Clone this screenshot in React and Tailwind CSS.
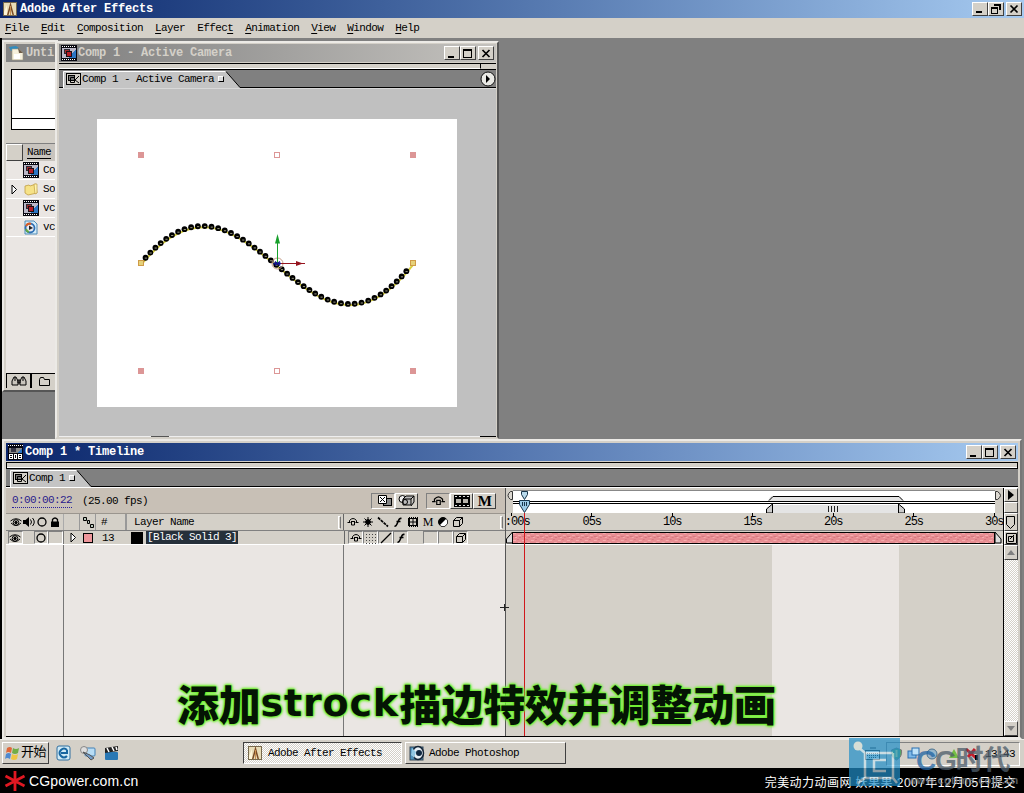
import React from "react";

const MENU = ["File", "Edit", "Composition", "Layer", "Effect", "Animation", "View", "Window", "Help"];
const MENU_KEY = { Effect: 5 };

const RAISED = "border border-t-white border-l-white border-r-[#404040] border-b-[#404040] bg-[#d4d0c8]";
const SUNKEN = "border border-t-[#808080] border-l-[#808080] border-r-white border-b-white";
const DITHER = "bg-[repeating-conic-gradient(#ffffff_0_25%,#d4d0c8_0_50%)] bg-[length:2px_2px]";

const WindowButtons = () => (
  <div className="flex h-[14px]">
    <span className={`flex w-4 items-center justify-center ${RAISED}`}>
      <svg width="12" height="11" shapeRendering="crispEdges"><path d="M2 8h6v2h-6z" /></svg>
    </span>
    <span className={`flex w-4 items-center justify-center ${RAISED}`}>
      <svg width="12" height="11" shapeRendering="crispEdges">
        <path d="M1 1h9v9h-9zM2 3v6h7v-6z" fillRule="evenodd" />
      </svg>
    </span>
    <span className={`ml-0.5 flex w-4 items-center justify-center ${RAISED}`}>
      <svg width="12" height="11"><path d="M2.500 2l7 7m0-7l-7 7" stroke="#000" strokeWidth="1.700" /></svg>
    </span>
  </div>
);

const AeIcon = () => (
  <svg width="14" height="14" viewBox="0 0 14 14">
    <rect x=".5" y=".5" width="13" height="13" fill="#e8dcb8" stroke="#76694d" />
    <path d="M1 10l3-7v10H1z" fill="#fff5d8" />
    <path d="M7.500 0L4 13h1.500L7.500 6l2 7H11z" fill="#7a4a24" />
    <path d="M7.500 4v9" stroke="#c89050" />
  </svg>
);

const CompIcon = () => (
  <svg width="16" height="16" viewBox="0 0 16 16" shapeRendering="crispEdges">
    <rect width="16" height="16" fill="#080810" />
    <path d="M1 1.500h14M1 14.500h14" stroke="#fff" strokeDasharray="1 1" />
    <rect x="1" y="3" width="14" height="10" fill="#bbb8c8" />
    <path d="M15 4v9h-7z" fill="#2d76c4" />
    <rect x="3" y="4" width="6" height="5" fill="#2c2c34" />
    <rect x="4" y="5" width="4" height="3" fill="#a02a30" />
    <rect x="5" y="6" width="6" height="6" fill="#1a1014" />
    <rect x="6" y="7" width="4" height="4" fill="#b81c28" />
  </svg>
);

const TimelineIcon = () => (
  <svg width="15" height="16" viewBox="0 0 15 16" shapeRendering="crispEdges">
    <rect width="15" height="16" fill="#050510" />
    <path d="M0 1.500h15" stroke="#fff" strokeDasharray="1 1" />
    <rect x="1" y="4" width="13" height="5" fill="#888" />
    <path d="M3 4h5v4h-5z" fill="#334" />
    <path d="M14 4v5h-5z" fill="#2d76c4" />
    <path d="M1.500 10.500h3v4h-3zM6.500 10.500h2v4h-2zM10.500 10.500h3v4h-3zM1 12.500h4M10 12.500h4" fill="none" stroke="#fff" />
  </svg>
);

const TabIcon = () => (
  <svg width="15" height="12" viewBox="0 0 15 12">
    <rect x=".5" y=".5" width="14" height="11" fill="#d4d0c8" stroke="#000" />
    <rect x="2.500" y="2.500" width="6" height="5" fill="#777" stroke="#000" />
    <path d="M4.500 4.500h4v5h-4zM9 7l4-4M9 7l4 3" fill="none" stroke="#000" />
  </svg>
);

const ProjectIcon = () => (
  <svg width="16" height="16" viewBox="0 0 16 16" className="shrink-0">
    <path d="M1 2l7-1 3 2-8 3z" fill="#2f8cc0" />
    <path d="M4 4h7l4 4v7H4z" fill="#f6f0dc" stroke="#9b937e" strokeWidth=".6" />
    <path d="M6 14V9h6v5z" fill="#fff" /><path d="M10 3l5 5h-4z" fill="#6d5c48" />
  </svg>
);

const FolderIcon = () => (
  <svg width="14" height="13" viewBox="0 0 14 13">
    <path d="M1 3l4-1 1 1 6-2 1 9-9 2-3-2z" fill="#f6e287" stroke="#c09d43" strokeWidth=".8" />
    <path d="M10 1l3 0v9l-2 1z" fill="#fff4b0" stroke="#c09d43" strokeWidth=".7" />
  </svg>
);

const QuickTimeIcon = () => (
  <svg width="14" height="15" viewBox="0 0 14 15">
    <path d="M1 1h9l3 3v10H1z" fill="#d4ecf8" stroke="#4e8bb8" />
    <circle cx="6" cy="8" r="4.500" fill="#e9eaf0" stroke="#2d6eb4" strokeWidth="1.800" />
    <path d="M2 6a4 4 0 0 1 5-2" stroke="#d85b24" strokeWidth="2" fill="none" />
    <path d="M2 9a4 4 0 0 0 3 3" stroke="#63a845" strokeWidth="2" fill="none" />
    <path d="M5 5.500l4 2.500-4 2z" fill="#222" />
  </svg>
);

const Twirl = () => (
  <svg width="7" height="11" viewBox="0 0 7 11"><path d="M1 1v9l4.500-4.500z" fill="#fff" stroke="#000" /></svg>
);

// strokes for the column and layer switches, drawn on a 12x12 grid
const SWITCHES = {
  eye: <g fill="none" stroke="#000"><path d="M0.500 5Q6 .5 11.500 5M1 7q5 5 10 0" /><circle cx="6" cy="6.500" r="2.800" /><circle cx="6" cy="6.500" r="1.200" fill="#000" /></g>,
  sound: <g><path d="M0 4h2.500L6 1v10L2.500 8H0z" /><path d="M7.500 3.500q2 2.500 0 5M9.500 2q3.500 4 0 8" fill="none" stroke="#000" /></g>,
  solo: <circle cx="6" cy="6" r="4" fill="none" stroke="#000" strokeWidth="1.300" />,
  lock: <g><path d="M2 5.500h8v5.500H2z" /><path d="M3.500 6V3.500q2.500-3 5 0V6" fill="none" stroke="#000" strokeWidth="1.300" /></g>,
  shy: <g fill="none" stroke="#000"><path d="M2.500 6V4.500q3.500-4 7 0V6M.5 6.500h3M8.500 6.500h3M4.500 6v3h3v-3M4 5.500h4" /></g>,
  sun: <g stroke="#000"><circle cx="6" cy="6" r="2.400" /><path d="M6 1v10M1 6h10M2.500 2.500l7 7M9.500 2.500l-7 7" /></g>,
  slash: <path d="M1 1.500l10 9" stroke="#000" strokeWidth="1.700" strokeDasharray="3 .8" />,
  quality: <path d="M1 11L11 1" stroke="#000" strokeWidth="1.200" />,
  fx: <path d="M2.500 10q1.500 .5 2.500-2l2-4.500q.8-1.500 2.500-1M4.500 5.500h4" fill="none" stroke="#000" strokeWidth="1.600" />,
  film: <g><path d="M1 1h10v10H1z" /><path d="M3 3h2.500v2.500H3zM6.500 3H9v2.500H6.500zM3 6.500h2.500V9H3zM6.500 6.500H9V9H6.500z" fill="#d4d0c8" /><path d="M1 1.500h10M1 10.500h10" stroke="#d4d0c8" strokeDasharray="1 1" /></g>,
  contrast: <g><circle cx="6" cy="6" r="4.500" stroke="#000" /><path d="M9 3a4 4 0 0 1-6 6z" fill="#fff" /></g>,
  cube: <path d="M1.500 4.500h6v6h-6zM1.500 4.500l3-3h6l-3 3M10.500 1.500v6l-3 3" fill="none" stroke="#000" />,
  dots: <path d="M1 2.500h11M1 5.500h11M1 8.500h11M1 11.500h11" stroke="#444" strokeDasharray="1 2" />,
  tag: <g fill="#b9c9bd" stroke="#000"><path d="M1.500 1.500h3v3h-3zM5.500 4.500h2v3h-2zM8.500 8.500h3v3h-3z" /></g>,
};

const Switch = ({ name, w = 12, h = 12 }) => (
  <svg width={w} height={h} viewBox="0 0 12 12" className="shrink-0">{SWITCHES[name]}</svg>
);

const Tab = ({ label, width }) => (
  <div className="relative flex h-[18px] bg-[#808080] border-b border-black">
    <svg width={width} height="18" className="absolute left-1 top-0">
      <path d={`M0 18V1.500H${width - 15}L${width - 1} 17.500V18z`} fill="#c4c4c4" />
      <path d={`M.5 18V1.500H${width - 15}`} stroke="#fff" fill="none" />
      <path d={`M${width - 15} 1.500L${width - 1} 17.500`} stroke="#000" fill="none" />
    </svg>
    <div className="relative ml-[7px] flex items-center pt-px">
      <TabIcon />
      <span className="ml-px">{label}</span>
      <span className="ml-1 size-[6px] border border-black border-t-white border-l-white bg-[#ddd]" />
    </div>
  </div>
);

const ProjectWindow = () => (
  <section className="absolute left-[2px] top-[2px] flex h-[352px] w-[56px] flex-col border-t-2 border-l-2 border-b-2 border-t-[#eceae6] border-l-[#eceae6] border-b-[#555] bg-[#d4d0c8] py-0.5 pl-0.5">
    <div className="flex h-[18px] items-center bg-[#858585] pl-0.5 text-[12px] font-bold tracking-[-0.2px] text-[#d4d0c8]">
      <ProjectIcon /><span className="ml-0.5">Unti</span>
    </div>
    <div className="h-[81px] pt-[7px] pl-[5px]">
      <div className="h-[61px] border border-r-0 border-black bg-white">
        <div className="h-[49px] border-b border-black" />
      </div>
    </div>
    <div className="flex h-[18px] border-t border-[#808080] bg-[#c8c4be]">
      <span className={`h-[17px] w-[17px] ${RAISED}`} />
      <span className="ml-1 mt-px h-[14px] border-b border-black leading-[15px]">Name</span>
    </div>
    <ul className="grow bg-[#eae6e3]">
      {[
        [<CompIcon />, "Co"],
        [<FolderIcon />, "So", true],
        [<CompIcon />, "vc"],
        [<QuickTimeIcon />, "vc"],
      ].map(([icon, label, group], i) => (
        <li key={i} className="flex h-[19px] items-center border-b border-white">
          <span className="flex w-[17px] shrink-0 justify-center">{group && <Twirl />}</span>
          <span className="flex w-4 shrink-0 justify-center">{icon}</span>
          <span className="ml-1">{label}</span>
        </li>
      ))}
    </ul>
    <div className="flex h-[15px] border-t border-black">
      <span className="flex w-[26px] shrink-0 items-center justify-center border-r-2 border-l border-black">
        <svg width="18" height="12"><path d="M2 10V6l2-4h2l2 4v4zM10 10V6l2-4h2l2 4v4zM8 5h2v3H8zM5 2v4M13 2v4" fill="#c8c4bc" stroke="#000" /></svg>
      </span>
      <span className="flex w-[26px] shrink-0 items-center justify-center">
        <svg width="12" height="10"><path d="M.5 9.500v-6l1-2h3l1 2h5v6z" fill="none" stroke="#000" /></svg>
      </span>
    </div>
  </section>
);

const CURVE = [[141, 263], [250, 132], [306, 402], [413, 263]];

function curvePoint(t) {
  const u = 1 - t;
  const k = [u * u * u, 3 * u * u * t, 3 * u * t * t, t * t * t];
  return [0, 1].map((axis) => CURVE.reduce((sum, p, i) => sum + p[axis] * k[i], 0));
}

// points at an even distance along the curve
function strokeDots(gap) {
  const dots = [];
  let last = CURVE[0];
  for (let t = 0; t < 0.99; t += 0.001) {
    const p = curvePoint(t);
    if (Math.hypot(p[0] - last[0], p[1] - last[1]) >= gap) {
      dots.push(p);
      last = p;
    }
  }
  return dots;
}

const CompCanvas = () => (
  <svg width="360" height="288" viewBox="97 119 360 288" className="bg-white">
    <path d="M141 263C250 132 306 402 413 263" fill="none" stroke="#d8d040" strokeWidth="2" transform="translate(.6 1.200)" />
    {strokeDots(6.75).map(([x, y]) => (
      <g key={x}>
        <circle cx={x} cy={y} r="2.900" />
        <path d={`M${x - 0.8} ${y + 0.4}h2.200`} stroke="#d9d9b4" strokeWidth=".7" />
      </g>
    ))}
    {[141, 413].map((x) => [155, 371].map((y) => (
      <rect key={`${x}-${y}`} x={x - 3} y={y - 3} width="6" height="6" fill="#dc9696" />
    )))}
    {[155, 371].map((y) => (
      <rect key={y} x="274.500" y={y - 2.5} width="5" height="5" fill="#fff" stroke="#dc9696" />
    ))}
    {[141, 413].map((x) => (
      <rect key={x} x={x - 2.5} y="260.500" width="5" height="5" fill="#e6d27a" stroke="#cf9b48" />
    ))}
    <circle cx="277.500" cy="263.500" r="5.500" fill="none" stroke="#c49a86" />
    <path d="M277.500 263V242" stroke="#18a02c" /><path d="M275 243.500l2.500-9.500 2.500 9.500z" fill="#18a02c" />
    <path d="M278 263.500h27" stroke="#96141e" /><path d="M296 261l7 2.500-7 2.500z" fill="#96141e" />
    <path d="M273 263.500h8M275 261.500l5 4M280 261.500l-5 4" stroke="#14148c" strokeWidth="1.300" />
  </svg>
);

const CompWindow = () => (
  <section className="absolute left-[55px] top-[3px] flex h-[398px] w-[444px] flex-col border-2 border-t-[#eceae6] border-l-[#eceae6] border-r-[#555] border-b-[#d4d0c8] bg-[#d4d0c8] pl-0.5 pr-px pt-px">
    <div className="flex h-[18px] items-center bg-linear-to-r from-[#808080] to-[#c4c2be] pl-0.5 text-[12px] font-bold tracking-[-0.2px] text-[#d4d0c8]">
      <CompIcon /><span className="grow pl-px">Comp 1 - Active Camera</span>
      <div className="mr-0.5"><WindowButtons /></div>
    </div>
    <div className="mt-px flex h-[7px] border-y border-black">
      <div className="w-[422px] border-r border-b border-r-black border-b-white" />
    </div>
    <div className="relative">
      <Tab label="Comp 1 - Active Camera" width={178} />
      <svg width="16" height="16" className="absolute right-0 top-px">
        <circle cx="8" cy="8" r="7" fill="#e8e8e4" stroke="#111" /><path d="M6 4v8l4-4z" />
      </svg>
    </div>
    <div className="flex grow justify-start border-t border-[#d8d8d8] bg-[#c0c0c0] pl-[38px] pt-[30px]">
      <CompCanvas />
    </div>
    <div className="flex h-px bg-[#eee]">
      <span className="ml-[92px] w-[18px] bg-[#555]" />
      <span className="ml-auto w-4 bg-black" />
    </div>
  </section>
);

const SwitchBox = ({ children }) => (
  <span className={`flex h-[13px] w-[15px] items-center justify-center ${SUNKEN}`}>{children}</span>
);

const LayerPanel = () => (
  <div className="relative z-10 flex w-[500px] shrink-0 flex-col border-r border-[#555]">
    <div className="flex h-[25px] items-center bg-[#c8c0b6] pl-1.5">
      <span className="border-b border-dotted border-[#2a20a0] leading-[13px] text-[#2a1c8c]">0:00:00:22</span>
      <span className="ml-[10px]">(25.00 fps)</span>
      <div className="ml-auto mr-[9px] flex h-4 items-center">
        <span className={`flex h-4 w-[24px] items-center justify-end pr-0.5 ${SUNKEN}`}>
          <svg width="14" height="11"><rect x="5.500" y="3.500" width="8" height="7" fill="#888" stroke="#000" /><path d="M.5.5h8v8h-8zM2 2l5 5M7 2L2 7" fill="#fff" stroke="#000" /></svg>
        </span>
        <span className={`flex h-4 w-[23px] items-center justify-center ${RAISED}`}>
          <svg width="18" height="12"><circle cx="4.500" cy="4" r="3.500" fill="#eee" stroke="#000" /><path d="M5 4h8v6H5zM5 4l3-3h8l-3 3M16 1v6l-3 4" fill="#bbb" stroke="#000" /><circle cx="7" cy="7" r="2.500" fill="none" stroke="#000" /></svg>
        </span>
        <span className={`ml-2 flex h-4 w-[24px] items-center justify-center ${SUNKEN}`}><Switch name="shy" w={15} h={14} /></span>
        <span className={`flex h-4 w-[23px] items-center justify-center ${RAISED}`}>
          <svg width="16" height="12" shapeRendering="crispEdges"><path d="M0 0h16v12H0z" /><path d="M1 1.500h15M1 10.500h15" stroke="#ddd" strokeDasharray="2 2" /><path d="M2 4h5v4H2zM9 4h5v4H9z" fill="#b8b4ac" /></svg>
        </span>
        <span className={`flex h-4 w-[23px] items-center justify-center [font-family:'Liberation_Serif',serif] text-[15px] font-bold ${RAISED}`}>M</span>
      </div>
    </div>
    <div className="flex h-[18px] items-center border-t border-b border-t-[#9a958e] border-b-[#808080] bg-[#d4d0c8]">
      <div className="flex h-full w-[58px] items-center gap-px border-r border-[#aaa] pl-1">
        <Switch name="eye" /><Switch name="sound" /><Switch name="solo" /><Switch name="lock" />
      </div>
      <div className="h-full w-4 border-r border-[#999]" />
      <div className="flex h-full w-4 items-center justify-center border-r border-[#999]"><Switch name="tag" /></div>
      <div className="flex h-full w-[31px] items-center border-r-2 border-[#999] pl-[5px]">#</div>
      <div className="flex h-full w-[217px] items-center border-r border-[#666] pl-[7px]">
        Layer Name<span className="ml-auto mr-0.5 h-[13px] w-[3px] border border-white border-r-[#777]" />
      </div>
      <div className="flex h-full grow items-center gap-[3px] pl-[3px]">
        <Switch name="shy" /><Switch name="sun" /><Switch name="slash" /><Switch name="fx" /><Switch name="film" />
        <span className="w-3 text-center [font-family:'Liberation_Serif',serif] text-[12px] tracking-normal">M</span>
        <Switch name="contrast" /><Switch name="cube" />
        <span className="ml-auto mr-0.5 h-[13px] w-[3px] border border-white border-r-[#777]" />
      </div>
    </div>
    <div className="flex h-[14px] items-center border-b border-white bg-[#d4d0c8]">
      <div className="flex h-full w-[58px] border-r border-[#777] pl-0.5">
        <SwitchBox><Switch name="eye" /></SwitchBox>
        <span className="w-[11px]" />
        <SwitchBox><Switch name="solo" /></SwitchBox>
        <SwitchBox />
      </div>
      <span className="ml-1.5"><Twirl /></span>
      <span className="ml-1.5 h-[10px] w-[10px] border border-black bg-[#ee969b]" />
      <span className="ml-[9px] w-[29px]">13</span>
      <span className="h-3 w-3 bg-black" />
      <span className="ml-[3px] h-[13px] bg-[#26303a] px-px leading-[13px] text-white">[Black Solid 3]</span>
      <div className="ml-auto flex h-full w-[161px] border-l border-[#666] pl-[3px]">
        <SwitchBox><Switch name="shy" /></SwitchBox>
        <SwitchBox><Switch name="dots" /></SwitchBox>
        <SwitchBox><Switch name="quality" /></SwitchBox>
        <SwitchBox><Switch name="fx" /></SwitchBox>
        <span className="w-[15px]" />
        <SwitchBox /><SwitchBox />
        <SwitchBox><Switch name="cube" /></SwitchBox>
      </div>
    </div>
    <div className="flex grow bg-[#eae6e3]">
      <div className="w-[58px] border-r border-[#777]" />
      <div className="w-[280px] border-r border-[#777]" />
    </div>
    {/* splitter cursor */}
    <svg width="11" height="7" className="absolute -right-[5px] top-[116px]"><path d="M1 3.500h9M5.500 0v7" stroke="#222" /></svg>
  </div>
);

const TimeNavigator = () => (
  <svg width="498" height="25" viewBox="506 488 498 25" className="block shrink-0 bg-[#d0ccc4]">
    <rect x="513" y="491" width="482" height="22" fill="#fff" />
    <path d="M513 490.500h482" stroke="#888" />
    <path d="M772 496h127l4 4v1H768l2-4zM772 505h127v8H772z" fill="#e4e4e4" />
    <path d="M769 500.500l4-4h126l4 4" fill="none" stroke="#000" />
    <path d="M513 501.500h482M513 503.500h482" stroke="#000" />
    <path d="M512.500 491.500v8h-2q-5-4 0-8zM995.500 491.500v8h2q6-4 0-8z" fill="#ddd9d2" stroke="#333" />
    <path d="M772.500 504v9h-6v-4l6-5M898.500 504v9h6v-4l-6-5" fill="#ccc" stroke="#000" />
    <path d="M828.500 506v6M831.500 506v6M834.500 506v6M837.500 506v6" stroke="#222" />
    <path d="M521.500 491.500h6v3l-3 5-3-5z" fill="#b8d9ec" stroke="#18344a" />
    <path d="M519.500 500.500h10v4l-5 8-5-8z" fill="#9ccae6" stroke="#18344a" />
    <path d="M522.500 502v4M524.500 502v4M526.500 502v4" stroke="#18344a" />
  </svg>
);

const TIMES = [":00s", "05s", "10s", "15s", "20s", "25s", "30s"];

const TrackPanel = () => (
  <div className="relative flex w-[498px] shrink-0 flex-col overflow-hidden border-r border-black">
    <TimeNavigator />
    <div className="-ml-[35px] flex h-[18px] w-[570px] border-b border-[#808080] bg-[#d4d0c8] text-[12px] tracking-[-1px]">
      {TIMES.map((time, i) => (
        <div key={time} className="flex w-[80.5px] shrink-0 flex-col items-center">
          <span className="h-[3px] w-px shrink-0 bg-black" />
          <span className={`leading-[13px] ${i === 0 ? "pl-3" : ""}`}>{time}</span>
        </div>
      ))}
    </div>
    <div className="flex h-[14px] items-center border-b border-white">
      <svg width="498" height="13" viewBox="506 531 498 13">
        <defs>
          <pattern id="grain" width="9" height="7" patternUnits="userSpaceOnUse">
            <rect width="9" height="7" fill="#e88e93" />
            <path d="M0 1.500h3M5 3.500h3M2 5.500h2" stroke="#f4adae" /><path d="M4 .5h2M0 4.500h3M6 5.500h2" stroke="#d57a80" />
          </pattern>
        </defs>
        <rect x="512.500" y="532.500" width="483" height="11" fill="url(#grain)" stroke="#000" />
        <path d="M512.500 532v11h-6v-4zM996 532v11h6v-4z" fill="#ddd" stroke="#000" />
      </svg>
    </div>
    <div className="flex grow bg-[#d4d0c8]">
      <div className="ml-[266px] w-[127px] bg-[#eae6e3]" />
    </div>
    <div className="absolute top-[25px] bottom-0 left-[18px] w-px bg-[#d0181c]" />
  </div>
);

const ScrollColumn = () => (
  <div className="flex grow flex-col">
    <div className={`flex h-[14px] items-center justify-center ${RAISED}`}><svg width="8" height="10"><path d="M1 0v10l6-5z" /></svg></div>
    <div className={`h-[11px] ${RAISED}`} />
    <div className={`flex h-[18px] items-center justify-center ${RAISED}`}><svg width="10" height="13"><path d="M.5.5h8v8l-4 4-4-4z" fill="none" stroke="#000" /></svg></div>
    <div className={`flex h-[14px] items-center justify-center ${RAISED}`}><svg width="11" height="11"><path d="M.5.5h10v10H.5zM2.500 3.500h5v5h-5zM4 6l4-4" fill="none" stroke="#000" /></svg></div>
    <div className={`flex grow flex-col justify-between ${DITHER}`}>
      <div className={`flex h-[15px] items-center justify-center ${RAISED}`}><svg width="8" height="5"><path d="M0 5l4-5 4 5z" fill="#808080" /></svg></div>
      <div className={`flex h-[15px] items-center justify-center ${RAISED}`}><svg width="8" height="5"><path d="M0 0l4 5 4-5z" fill="#808080" /></svg></div>
    </div>
  </div>
);

const TimelineWindow = () => (
  <section className="absolute left-[2px] top-[401px] flex h-[300px] w-[1020px] flex-col border-2 border-t-[#eceae6] border-l-[#eceae6] border-r-[#777] border-b-[#eceae6] bg-[#d4d0c8] px-0.5 pt-0.5">
    <div className="flex h-[18px] items-center bg-linear-to-r from-[#0a246a] via-[#5577b0] to-[#a6caf0] pl-0.5 text-[12px] font-bold tracking-[-0.2px] text-white">
      <TimelineIcon /><span className="grow pl-0.5">Comp 1 * Timeline</span>
      <div className="mr-0.5"><WindowButtons /></div>
    </div>
    <div className="mt-px h-[7px] border border-black border-b-black shadow-[inset_0_-1px_#fff]" />
    <Tab label="Comp 1" width={82} />
    <div className="flex min-h-0 grow border-t border-b border-t-white border-b-black">
      <LayerPanel />
      <TrackPanel />
      <ScrollColumn />
    </div>
  </section>
);

const PhotoshopIcon = () => (
  <svg width="16" height="16"><rect x="1" y="2" width="13" height="13" fill="#4c91bd" stroke="#345" /><ellipse cx="9" cy="8" rx="5.500" ry="6.500" fill="#e8f0f6" stroke="#162536" strokeWidth="1.500" /><circle cx="10" cy="8" r="3" fill="#102840" /><path d="M3 3l4 4-2 6-3-3z" fill="#92c7e3" /></svg>
);

const Taskbar = () => (
  <footer className="flex h-[29px] shrink-0 items-start border-t border-[#eceae6] bg-[#d4d0c8] pt-0.5 pl-0.5">
    <button className={`flex h-[22px] w-[47px] items-center pl-0.5 ${RAISED}`}>
      <svg width="16" height="16">
        <path d="M2 3q3-2 5 0l-1 5q-3-2-5 0z" fill="#e0683a" /><path d="M8 3q3 2 6 0l-1 5q-3 2-6 0z" fill="#72ad46" />
        <path d="M1 9q3-2 5 0l-1 5q-3-2-5 0z" fill="#4e8ad0" /><path d="M7 9q3 2 6 0l-1 5q-3 2-6 0z" fill="#efc542" />
      </svg>
      <span className="text-[13px] tracking-[-0.5px]">开始</span>
    </button>
    <div className="ml-[7px] flex gap-2 pt-[3px]">
      <svg width="16" height="16"><rect x="1" y="1" width="13" height="14" rx="2" fill="#cfe9f5" stroke="#2f6f9f" /><path d="M11 5q-3-3-6 0t0 6 6 0M5 8h6V5" fill="none" stroke="#1766a0" strokeWidth="2" /></svg>
      <svg width="16" height="16"><rect x="5" y="3" width="10" height="8" rx="1" fill="#b8dcf4" stroke="#4582b6" /><circle cx="4" cy="5" r="3.500" fill="#ddd" stroke="#888" /><path d="M3 7l8 8 3-2-4-3z" fill="#729bc8" stroke="#555" /></svg>
      <svg width="16" height="16"><rect x="1" y="7" width="13" height="8" rx="1" fill="#2a78b4" /><path d="M1 3l13-2v5L1 8z" fill="#222" /><path d="M3 3l2 4M8 2l2 4M12 2l1 3" stroke="#fff" strokeWidth="1.500" /></svg>
    </div>
    <div className={`ml-[123px] flex h-[22px] w-[159px] items-center border border-t-[#404040] border-l-[#404040] border-r-white border-b-white pl-1 ${DITHER}`}>
      <AeIcon /><span className="ml-1.5">Adobe After Effects</span>
    </div>
    <div className={`ml-[3px] flex h-[22px] w-[161px] items-center pl-[3px] ${RAISED}`}>
      <PhotoshopIcon /><span className="ml-1">Adobe Photoshop</span>
    </div>
    <div className="ml-auto mr-1 flex items-center">
      <svg width="18" height="14" className="mr-1"><rect x="1.500" y="3.500" width="14" height="9" fill="#eee" stroke="#222" /><path d="M3 6.500h12M3 8.500h12M5 10.500h7" stroke="#222" strokeDasharray="1 1" /><path d="M6 1h6" stroke="#222" /></svg>
      <div className={`flex h-[24px] w-[134px] items-center pl-[3px] ${SUNKEN}`}>
        <svg width="13" height="14"><path d="M6.500 1l5 2q1 7-5 10Q0 10 1.500 3z" fill="#54a568" stroke="#777" /><path d="M6.500 3v7" stroke="#f3e479" strokeWidth="2" /></svg>
        <svg width="14" height="14" className="ml-1"><rect x="1" y="4" width="8" height="7" fill="#7eb9e8" stroke="#2a6eaf" /><rect x="5" y="1" width="7" height="7" fill="#bfe2f8" stroke="#2a6eaf" /></svg>
        <svg width="14" height="14" className="ml-1"><circle cx="7" cy="7" r="5" fill="#98b6cb" stroke="#4a718d" /></svg>
        <svg width="14" height="14" className="ml-2"><path d="M2 11L7 2l5 9z" fill="#75bd45" /></svg>
        <svg width="14" height="14" className="ml-1"><path d="M1 2l10 9M10 2L3 10" stroke="#c01f2d" strokeWidth="3" /><path d="M10 8h3v5h-3z" /></svg>
        <span className="ml-auto mr-1">13:43</span>
      </div>
    </div>
  </footer>
);

const Watermark = () => (
  <div className="absolute left-[849px] top-[738px] z-20 flex">
    <svg width="51" height="48" className="opacity-70">
      <rect width="51" height="48" fill="#218fc9" />
      <path d="M8 8l8 7h28M16 15v25h28V15M37 22H25v11h12M16 40l-7 5M44 40l4 5" fill="none" stroke="#c7e3ef" strokeWidth="2.500" />
      <circle cx="9" cy="8" r="4.500" fill="#d9e4dd" />
    </svg>
    <div className="ml-2 flex flex-col pt-2 opacity-75 [font-family:'Liberation_Sans','Noto_Sans_CJK_SC',sans-serif]">
      <span className="pl-2 text-[28px] leading-[29px] font-bold tracking-[-1.2px] whitespace-nowrap text-[#4c5c6a]"><span className="text-[#1f63a2]">C</span>G时代</span>
      <span className="text-[11px] leading-[10px] font-bold tracking-[0.3px] text-[#747c82]">www.cgtime.com.cn</span>
    </div>
  </div>
);

export default function App() {
  return (
    <div className="relative flex h-[793px] w-[1024px] flex-col overflow-hidden [font-family:'Liberation_Mono','Noto_Sans_CJK_SC',monospace] text-[11px] leading-[14px] tracking-[-0.6px] whitespace-pre text-black">
      <header className="flex h-[18px] shrink-0 items-center bg-linear-to-r from-[#0a246a] to-[#a6caf0] pr-0.5 pl-[3px] text-[12px] font-bold tracking-[-0.2px] text-white">
        <AeIcon /><span className="grow pl-[3px]">Adobe After Effects</span>
        <div className="flex h-[14px]">
          <span className={`w-4 ${RAISED}`}><svg width="14" height="12"><path d="M3 8h6v2H3z" /></svg></span>
          <span className={`w-4 ${RAISED}`}><svg width="14" height="12" shapeRendering="crispEdges"><path d="M5 1h7v6h-2V3H5zM2 4h7v7H2zM3 6v4h5V6z" fillRule="evenodd" /></svg></span>
          <span className={`ml-0.5 w-4 ${RAISED}`}><svg width="14" height="12"><path d="M3.500 2.500l7 7m0-7l-7 7" stroke="#000" strokeWidth="1.700" /></svg></span>
        </div>
      </header>
      <nav className="flex h-5 shrink-0 items-center gap-3 bg-[#d4d0c8] pl-[5px]">
        {MENU.map((item) => {
          const key = MENU_KEY[item] ?? 0;
          return (
            <span key={item}>
              {item.slice(0, key)}<u className="underline-offset-2">{item[key]}</u>{item.slice(key + 1)}
            </span>
          );
        })}
      </nav>
      <main className="relative h-[701px] shrink-0 border-l-2 border-black bg-[#808080]">
        <div className="absolute inset-y-0 -left-[2px] w-full">
          <ProjectWindow />
          <CompWindow />
          <TimelineWindow />
        </div>
      </main>
      <Taskbar />
      <div className="flex h-[25px] shrink-0 items-center bg-black pr-2 pl-1 [font-family:'Liberation_Sans','Noto_Sans_CJK_SC',sans-serif] text-white">
        <svg width="22" height="22"><path d="M11 1v20M1.500 6l19 10M20.500 6l-19 10" stroke="#e01822" strokeWidth="2.800" /></svg>
        <span className="ml-[3px] text-[14px] tracking-[0.15px]">CGpower.com.cn</span>
        <span className="ml-auto pt-1 text-[12px] tracking-[0.45px]">完美动力动画网 妖果果 2007年12月05日提交</span>
      </div>
      {/* subtitle */}
      <p className="absolute left-[177px] top-[678px] z-20 flex h-[50px] items-center [font-family:'Noto_Sans_CJK_SC',sans-serif] text-[42px] leading-[50px] font-black tracking-[-0.2px] text-[#041404] [text-shadow:0_0_2px_#6cf02c,0_0_2px_#6cf02c,0_0_3px_#6cf02c,0_0_3px_#6cf02c,0_0_4px_#8cf850]">
        添加
        <span className="w-[139px] [font-family:'DejaVu_Sans',sans-serif] text-[38px] font-bold tracking-[0.8px]">strock</span>
        描边特效并调整动画
      </p>
      <Watermark />
    </div>
  );
}
